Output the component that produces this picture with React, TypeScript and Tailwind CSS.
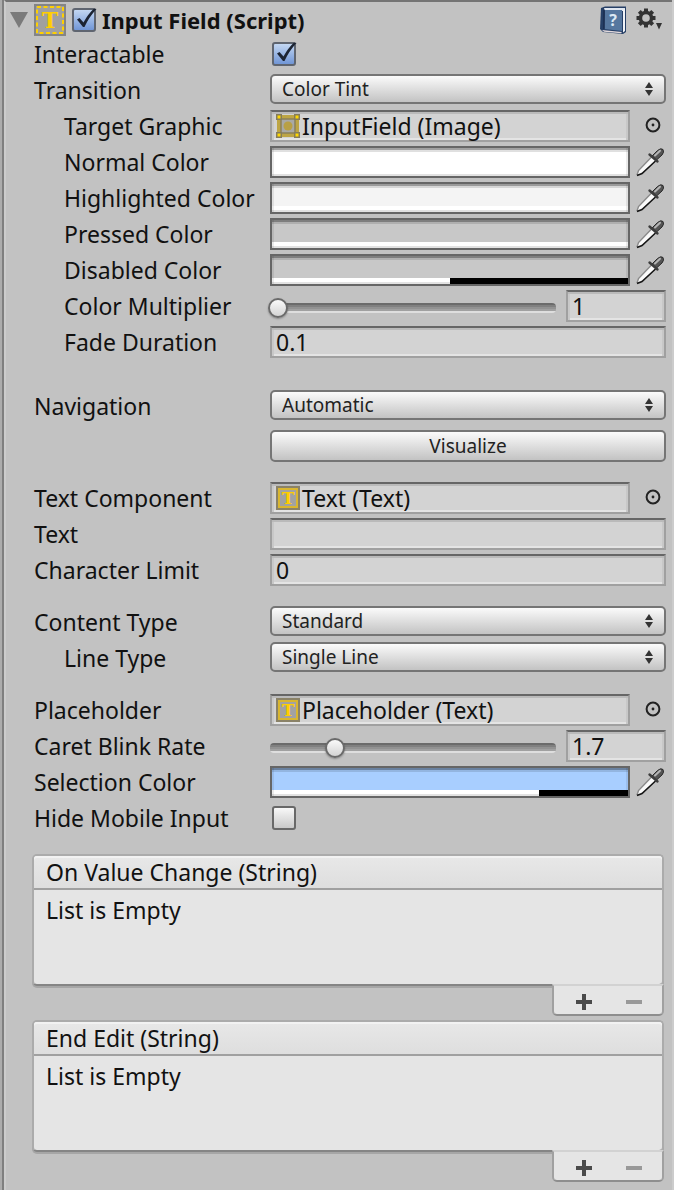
import React from 'react';

const textField =
  'h-8 min-w-0 border-2 border-[#a0a0a0] border-t-[#666666] bg-[#d3d3d3] text-[23px] leading-7 text-[#111111] shadow-[inset_0_2px_0_#bababa,inset_2px_0_0_#c8c8c8,inset_-2px_0_0_#c8c8c8,inset_0_-2px_0_#e4e4e4] outline-none';

const raised =
  'w-full rounded-[5px] border-2 border-[#757575] bg-linear-to-b from-[#fbfbfb] to-[#c3c3c3] text-[19px] text-[#222222]';

function Row({ label, id, indent, children }: { label: string; id: string; indent?: boolean; children: React.ReactNode }) {
  return (
    <div className="flex h-8">
      <label
        htmlFor={id}
        className={`w-[236px] shrink-0 whitespace-nowrap text-[23px] leading-8 ${indent ? 'pl-[30px]' : ''}`}
      >
        {label}
      </label>
      <div className="flex min-w-0 flex-1 items-start">{children}</div>
    </div>
  );
}

function CheckBox({ id, label, checked }: { id: string; label?: string; checked?: boolean }) {
  return (
    <span className="grid size-6 shrink-0">
      <input
        id={id}
        type="checkbox"
        aria-label={label}
        defaultChecked={checked}
        className="peer col-start-1 row-start-1 size-6 appearance-none rounded-[3px] border-2 border-[#686868] bg-linear-to-b from-[#f8f8f8] to-[#c9c9c9] checked:border-[#5f6570] checked:from-[#c3d7f2] checked:to-[#7196d6]"
      />
      <svg
        viewBox="0 0 24 24"
        className="pointer-events-none invisible col-start-1 row-start-1 size-6 overflow-visible peer-checked:visible"
      >
        <path d="M5 11.5 L7.5 10 L11.5 14.5 Q16 6 22 0.5 L24.5 1 Q17 9 12.5 19 L11 19 Z" fill="#1c2433" />
      </svg>
    </span>
  );
}

function Popup({ id, options }: { id: string; options: string[] }) {
  return (
    <div className="relative h-[30px] w-full">
      <select id={id} className={`${raised} h-[30px] appearance-none pl-[10px] leading-[26px]`}>
        {options.map((option) => (
          <option key={option}>{option}</option>
        ))}
      </select>
      <svg viewBox="0 0 8 14" className="pointer-events-none absolute top-2 right-[13px] h-[14px] w-2" fill="#333333">
        <path d="M4 0 L8 6 H0 Z M0 8 H8 L4 14 Z" />
      </svg>
    </div>
  );
}

function TextIcon() {
  return (
    <svg viewBox="0 0 24 24" className="size-6 shrink-0">
      <rect width="24" height="24" fill="#8a8268" />
      <rect x="3" y="3" width="18" height="18" fill="#a2a2a2" stroke="#d9b630" strokeWidth="2" />
      <text x="12" y="18" textAnchor="middle" fontFamily="DejaVu Serif, serif" fontWeight="bold" fontSize="17" fill="#ffce00">
        T
      </text>
    </svg>
  );
}

function ImageIcon() {
  return (
    <svg viewBox="0 0 24 24" className="size-6 shrink-0">
      <rect x="1" y="1" width="22" height="22" fill="#bda545" />
      <rect x="5" y="5" width="14" height="14" fill="#a9a9a6" stroke="#8a8058" strokeWidth="1.5" />
      <circle cx="12" cy="12" r="4.5" fill="#b8a045" />
      {[0, 18].map((x) =>
        [0, 18].map((y) => (
          <g key={`${x}-${y}`}>
            <rect x={x} y={y} width="6" height="6" fill="#857c5c" />
            <rect x={x + 1.5} y={y + 1.5} width="3" height="3" fill="#ffd800" />
          </g>
        )),
      )}
    </svg>
  );
}

function ObjectField({ id, icon, value }: { id: string; icon: React.ReactNode; value: string }) {
  return (
    <>
      <button id={id} className={`${textField} flex flex-1 items-center gap-0.5 pl-1 text-left`}>
        {icon}
        <span className="whitespace-nowrap">{value}</span>
      </button>
      <button aria-label="Select object" className="flex h-8 w-9 shrink-0 justify-center pt-[7px] pl-[10px]">
        <svg viewBox="0 0 16 16" className="size-4">
          <circle cx="8" cy="8" r="6.4" fill="none" stroke="#222222" strokeWidth="2" />
          <circle cx="8" cy="8" r="1.4" fill="#222222" />
        </svg>
      </button>
    </>
  );
}

function Eyedropper() {
  return (
    <svg viewBox="0 0 28 30" className="h-[30px] w-7">
      <path d="M1 27.5 L2.5 22.5 L15.5 9 L19.5 13 L6 25.5 Z" fill="#fafafa" />
      <path d="M15.5 9 L2.5 22.5 L1 27" fill="none" stroke="#8a8a8a" strokeWidth="1.4" />
      <path d="M1 27.5 L6 25.5 L19.5 13" fill="none" stroke="#151515" strokeWidth="1.6" />
      <path d="M16 8 L21.5 2.5 Q25 -0.5 27 1.5 Q28.5 4 26 7 L20 12.5 Z" fill="#555555" stroke="#2a2a2a" strokeWidth="1" />
      <path d="M13.5 6.5 L21.5 13.5" stroke="#3d3d3d" strokeWidth="2.4" strokeLinecap="round" />
      <path d="M19 7.5 L24 2.8" stroke="#b4b4b4" strokeWidth="2" strokeLinecap="round" />
    </svg>
  );
}

function ColorField({ id, color, alpha }: { id: string; color: string; alpha: number }) {
  return (
    <>
      <button id={id} className="relative flex h-8 min-w-0 flex-1 flex-col border-2 border-[#666666]">
        <span className="w-full flex-1" style={{ backgroundColor: color }} />
        <span className="flex h-1.5 w-full bg-black">
          <span className="border-b-2 border-[#e2e2e2] bg-white" style={{ width: `${alpha * 100}%` }} />
        </span>
        <span className="absolute inset-0 shadow-[inset_0_2px_0_rgba(0,0,0,0.28),inset_0_4px_0_rgba(0,0,0,0.12),inset_2px_0_0_rgba(0,0,0,0.08),inset_-2px_0_0_rgba(0,0,0,0.08)]" />
      </button>
      <button aria-label="Pick color" className="flex h-8 w-9 shrink-0 justify-center pt-0.5 pl-1">
        <Eyedropper />
      </button>
    </>
  );
}

function SliderField({ id, label, value, min, max }: { id: string; label: string; value: number; min: number; max: number }) {
  return (
    <>
      <input
        id={id}
        type="range"
        min={min}
        max={max}
        step={0.1}
        defaultValue={value}
        className="mt-2 h-5 min-w-0 flex-1 appearance-none bg-transparent [&::-webkit-slider-runnable-track]:h-[10px] [&::-webkit-slider-runnable-track]:rounded-[4px] [&::-webkit-slider-runnable-track]:bg-[linear-gradient(#6b6b6b_0_2px,#808080_2px_4px,#929292_4px_6px,#a0a0a0_6px_8px,#dedede_8px)] [&::-webkit-slider-thumb]:-mt-[5px] [&::-webkit-slider-thumb]:-ml-0.5 [&::-webkit-slider-thumb]:size-5 [&::-webkit-slider-thumb]:appearance-none [&::-webkit-slider-thumb]:rounded-full [&::-webkit-slider-thumb]:border-2 [&::-webkit-slider-thumb]:border-[#6a6a6a] [&::-webkit-slider-thumb]:bg-linear-to-b [&::-webkit-slider-thumb]:from-[#fafafa] [&::-webkit-slider-thumb]:to-[#d4d4d4] [&::-webkit-slider-thumb]:shadow-[0_1px_2px_rgba(0,0,0,0.3)]"
      />
      <input aria-label={label} defaultValue={value} className={`${textField} ml-[10px] w-[100px] pl-1`} />
    </>
  );
}

function EventList({ title }: { title: string }) {
  return (
    <section>
      <div className="rounded-[5px] border-2 border-[#ababab] border-b-[#858585] bg-[#e5e5e5] shadow-[0_2px_0_#a6a6a6]">
        <h2 className="h-[34px] rounded-t-[3px] border-b-2 border-[#a0a0a0] bg-linear-to-b from-[#e8e8e8] to-[#dedede] pl-3 text-[23px] leading-8 shadow-[inset_0_2px_0_#f2f2f2]">
          {title}
        </h2>
        <p className="h-[94px] px-3 pt-1 text-[23px] leading-8">List is Empty</p>
      </div>
      <div className="relative -mt-0.5 ml-auto flex h-8 w-28 justify-center rounded-b-[5px] border-2 border-[#a0a0a0] border-t-[#d2d2d2] border-b-[#8e8e8e] bg-[#e5e5e5] pl-0.5">
        <button aria-label={`Add to ${title}`} className="flex w-[50px] items-center justify-center pt-1">
          <svg viewBox="0 0 16 16" className="size-4">
            <path d="M6 0 H10 V6 H16 V10 H10 V16 H6 V10 H0 V6 H6 Z" fill="#4a4a4a" />
          </svg>
        </button>
        <button aria-label={`Remove from ${title}`} className="flex w-[50px] items-center justify-center pt-1">
          <svg viewBox="0 0 16 16" className="size-4">
            <path d="M0 6 H16 V10 H0 Z" fill="#999999" />
          </svg>
        </button>
      </div>
    </section>
  );
}

function Header() {
  return (
    <header className="flex h-8 items-center pr-2 pl-1">
      <button aria-label="Collapse" className="w-6 shrink-0">
        <svg viewBox="0 0 18 16" className="h-4 w-[18px]">
          <path d="M0 0 H18 L9 16 Z" fill="#7a7a7a" />
        </svg>
      </button>
      <svg viewBox="0 0 32 32" className="size-8 shrink-0">
        <rect width="32" height="32" fill="#858585" />
        <rect x="2" y="2" width="28" height="28" fill="#a0a0a0" />
        <rect x="3" y="3" width="26" height="26" fill="#a0a0a0" stroke="#ffd000" strokeWidth="2" strokeDasharray="4 2.5" />
        <text x="16" y="24" textAnchor="middle" fontFamily="DejaVu Serif, serif" fontWeight="bold" fontSize="22" fill="#ffce00">
          T
        </text>
      </svg>
      <div className="ml-1.5 flex">
        <CheckBox id="enabled" label="Enabled" checked />
      </div>
      <h1 className="ml-1.5 flex-1 text-[22px] leading-8 font-bold whitespace-nowrap">Input Field (Script)</h1>
      <button aria-label="Help" className="shrink-0">
        <svg viewBox="0 0 26 28" className="h-7 w-[26px]">
          <path d="M1 2 L5 0.5 H26 V26 L23 28 L3 26 L0 23 Z" fill="#263f66" />
          <path d="M4 2 H25 V5 H5 Z" fill="#dfe6f0" />
          <path d="M23 4 L25 3 V25 L23 26.5 Z" fill="#f1f3f7" />
          <path d="M2 24 L22 26 L21 27.2 L4 25.8 Z" fill="#e2d9dc" />
          <path d="M5 4 H22 V25 L4 23 Z" fill="#56779f" />
          <path d="M4 4 V23" stroke="#1b2e50" strokeWidth="1.5" />
          <text x="13" y="20" textAnchor="middle" fontFamily="Noto Sans, sans-serif" fontWeight="bold" fontSize="16" fill="#dce9f5">
            ?
          </text>
        </svg>
      </button>
      <button aria-label="Settings" className="ml-[10px] shrink-0">
        <svg viewBox="0 0 28 24" className="h-6 w-7">
          <g stroke="#333333" strokeWidth="4">
            <path d="M10 0.5 V19.5 M0.5 10 H19.5 M3.3 3.3 L16.7 16.7 M16.7 3.3 L3.3 16.7" />
          </g>
          <circle cx="10" cy="10" r="7.3" fill="#333333" />
          <circle cx="10" cy="10" r="3.8" fill="#c2c2c2" />
          <path d="M20 15 H26 L23 21.5 Z" fill="#333333" />
        </svg>
      </button>
    </header>
  );
}

export default function App() {
  return (
    <div className="flex min-h-screen w-full border-r-2 border-l-2 border-r-[#cccccc] border-l-[#acacac] bg-[#c2c2c2] font-['Noto_Sans',sans-serif] text-[#111111]">
      <main className="min-w-0 flex-1 border-l-2 border-[#7f7f7f]">
        <div className="min-h-full border-t-2 border-l-2 border-t-[#747474] border-l-[#cccccc] pt-0.5">
          <Header />

          <div className="mt-0.5 flex flex-col gap-5 pr-1.5 pl-7">
            <div className="flex flex-col gap-1">
              <Row label="Interactable" id="interactable">
                <div className="flex pt-1 pl-0.5">
                  <CheckBox id="interactable" checked />
                </div>
              </Row>
              <Row label="Transition" id="transition">
                <Popup id="transition" options={['Color Tint', 'None', 'Sprite Swap', 'Animation']} />
              </Row>
              <Row label="Target Graphic" id="target" indent>
                <ObjectField id="target" icon={<ImageIcon />} value="InputField (Image)" />
              </Row>
              <Row label="Normal Color" id="normal" indent>
                <ColorField id="normal" color="#ffffff" alpha={1} />
              </Row>
              <Row label="Highlighted Color" id="highlighted" indent>
                <ColorField id="highlighted" color="#f4f4f4" alpha={1} />
              </Row>
              <Row label="Pressed Color" id="pressed" indent>
                <ColorField id="pressed" color="#c8c8c8" alpha={1} />
              </Row>
              <Row label="Disabled Color" id="disabled" indent>
                <ColorField id="disabled" color="#c8c8c8" alpha={0.5} />
              </Row>
              <Row label="Color Multiplier" id="multiplier" indent>
                <SliderField id="multiplier" label="Color Multiplier value" value={1} min={1} max={5} />
              </Row>
              <Row label="Fade Duration" id="fade" indent>
                <input id="fade" defaultValue="0.1" className={`${textField} w-full pl-1`} />
              </Row>
            </div>

            <div className="mt-3 flex flex-col gap-2">
              <Row label="Navigation" id="navigation">
                <Popup id="navigation" options={['Automatic', 'None', 'Horizontal', 'Vertical', 'Explicit']} />
              </Row>
              <div className="flex pl-[236px]">
                <button className={`${raised} h-8 leading-7`}>Visualize</button>
              </div>
            </div>

            <div className="flex flex-col gap-1">
              <Row label="Text Component" id="component">
                <ObjectField id="component" icon={<TextIcon />} value="Text (Text)" />
              </Row>
              <Row label="Text" id="text">
                <input id="text" className={`${textField} w-full pl-1`} />
              </Row>
              <Row label="Character Limit" id="limit">
                <input id="limit" defaultValue="0" className={`${textField} w-full pl-1`} />
              </Row>
            </div>

            <div className="flex flex-col gap-1">
              <Row label="Content Type" id="content">
                <Popup id="content" options={['Standard', 'Autocorrected', 'Password', 'Custom']} />
              </Row>
              <Row label="Line Type" id="line" indent>
                <Popup id="line" options={['Single Line', 'Multi Line Submit', 'Multi Line Newline']} />
              </Row>
            </div>

            <div className="flex flex-col gap-1">
              <Row label="Placeholder" id="placeholder">
                <ObjectField id="placeholder" icon={<TextIcon />} value="Placeholder (Text)" />
              </Row>
              <Row label="Caret Blink Rate" id="caret">
                <SliderField id="caret" label="Caret Blink Rate value" value={1.7} min={0} max={8} />
              </Row>
              <Row label="Selection Color" id="selection">
                <ColorField id="selection" color="#a8ceff" alpha={0.75} />
              </Row>
              <Row label="Hide Mobile Input" id="hide">
                <div className="flex pt-1 pl-0.5">
                  <CheckBox id="hide" />
                </div>
              </Row>
            </div>
          </div>

          <div className="mt-5 flex flex-col gap-1 pr-2 pb-2 pl-[26px]">
            <EventList title="On Value Change (String)" />
            <EventList title="End Edit (String)" />
          </div>
        </div>
      </main>
    </div>
  );
}
